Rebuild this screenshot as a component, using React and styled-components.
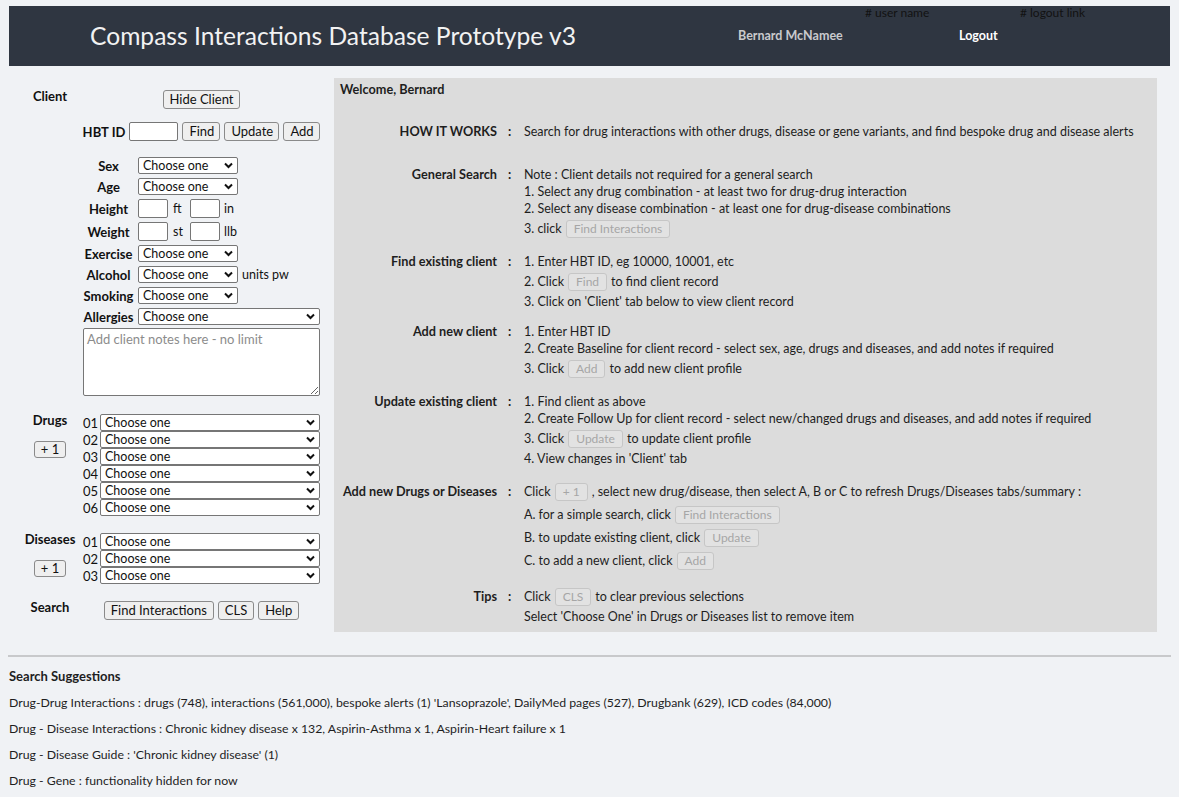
import React from "react";
import styled, { createGlobalStyle } from "styled-components";

const FONT = `"Lato", "Open Sans", sans-serif`;

const GlobalStyle = createGlobalStyle`
  html, body {
    margin: 0;
    padding: 0;
    background: #f0f2f5;
  }
  body {
    font-family: ${FONT};
    font-size: 12px;
    color: #1e1e1e;
  }
`;

const Page = styled.div`
  padding: 6px 9px 12px 9px;
  width: 1179px;
  box-sizing: border-box;
`;

/* ---------- header ---------- */

const Header = styled.header`
  display: flex;
  height: 60px;
  background: #2f3641;
`;

const TitleCell = styled.div`
  width: 729px;
  padding-left: 81px;
  box-sizing: border-box;
  line-height: 60px;
  font-size: 24.6px;
  color: #f2f2f2;
  white-space: nowrap;
`;

const UserCell = styled.div`
  display: flex;
  flex-direction: column;
  width: ${props => props.width}px;
`;

const Note = styled.span`
  line-height: 13px;
  padding-left: ${props => props.offset}px;
  font-size: 12px;
  color: #121212;
  white-space: nowrap;
`;

const HeaderLink = styled.span`
  margin-top: 9px;
  line-height: 16px;
  font-size: 12.5px;
  font-weight: 700;
  color: ${props => (props.bright ? "#ffffff" : "#c9cacd")};
  white-space: nowrap;
`;

/* ---------- main ---------- */

const Main = styled.div`
  display: flex;
  margin-top: 12px;
`;

const LeftPanel = styled.div`
  display: flex;
  flex-direction: column;
  width: 325px;
  padding: 12px 0 0 8px;
  box-sizing: border-box;
`;

const Section = styled.div`
  display: grid;
  grid-template-columns: 66px 237px;
  align-items: start;
  margin-top: ${props => props.gap || 0}px;
`;

const SideLabel = styled.div`
  display: flex;
  flex-direction: column;
  align-items: center;
  gap: 14px;
  line-height: 13px;
  font-weight: 700;
  font-size: 13px;
  color: #111;
`;

const Stack = styled.div`
  display: flex;
  flex-direction: column;
`;

const CenterRow = styled.div`
  display: flex;
  justify-content: center;
  align-items: center;
  gap: 4px;
  margin-top: ${props => props.gap || 0}px;
  white-space: nowrap;
`;

const Btn = styled.button`
  height: ${props => props.h || 19}px;
  min-width: ${props => props.w || 0}px;
  padding: 0 6px;
  font-family: ${FONT};
  font-size: 13px;
  line-height: 1;
  color: #111;
  background: #efefef;
  border: 1px solid #8a8a8a;
  border-radius: 3px;
  box-sizing: border-box;
  white-space: nowrap;
`;

const FieldLabel = styled.span`
  font-weight: 700;
  font-size: 13px;
  color: #111;
`;

const TextBox = styled.input`
  width: ${props => props.w}px;
  height: 19px;
  padding: 0 2px;
  border: 1px solid #767676;
  border-radius: 2px;
  background: #fff;
  box-sizing: border-box;
  font-family: ${FONT};
`;

const Demographics = styled.div`
  display: grid;
  grid-template-columns: 51px 1fr;
  column-gap: 4px;
  margin-top: 14px;
`;

const DemoLabel = styled.div`
  display: flex;
  align-items: center;
  justify-content: center;
  height: ${props => (props.tall ? 23 : 21)}px;
  font-weight: 700;
  font-size: 13px;
  color: #111;
  white-space: nowrap;
`;

const DemoField = styled.div`
  display: flex;
  align-items: center;
  gap: 4px;
  height: ${props => (props.tall ? 23 : 21)}px;
  font-size: 12.5px;
  color: #111;
  white-space: nowrap;
`;

const Unit = styled.span`
  width: 13px;
  padding-left: 1px;
`;

const SelectWrap = styled.span`
  position: relative;
  display: inline-flex;
  width: ${props => props.w}px;
  height: 17px;
`;

const Select = styled.select`
  appearance: none;
  -webkit-appearance: none;
  width: 100%;
  height: 17px;
  margin: 0;
  padding: 0 18px 0 4px;
  font-family: ${FONT};
  font-size: 12.5px;
  line-height: 15px;
  color: #111;
  background: #fff;
  border: 1px solid #767676;
  border-radius: 2px;
  box-sizing: border-box;
`;

const Chevron = styled.svg`
  position: absolute;
  right: 5px;
  top: 5px;
  width: 9px;
  height: 7px;
  pointer-events: none;
`;

const Notes = styled.textarea`
  width: 237px;
  height: 68px;
  margin: 1px 0 0 0;
  padding: 2px 3px;
  font-family: ${FONT};
  font-size: 13px;
  border: 1px solid #767676;
  border-radius: 2px;
  box-sizing: border-box;
  resize: vertical;
  &::placeholder {
    color: #8c8c8c;
  }
`;

const ListRow = styled.div`
  display: grid;
  grid-template-columns: 17px 220px;
  align-items: center;
  height: 17px;
  font-size: 13px;
  color: #111;
`;

/* ---------- right panel ---------- */

const RightPanel = styled.div`
  width: 823px;
  padding: 3px 6px 7px 6px;
  box-sizing: border-box;
  background: #dcdcdc;
  align-self: flex-start;
`;

const Welcome = styled.div`
  line-height: 17px;
  font-size: 12.7px;
  font-weight: 700;
`;

const Guide = styled.div`
  display: flex;
  flex-direction: column;
  gap: 13px;
  margin-top: 25px;
`;

const GuideRow = styled.div`
  display: grid;
  grid-template-columns: 157px 27px 1fr;
  align-items: start;
  margin-bottom: ${props => (props.spaced ? 13 : 0)}px;
`;

const GuideLabel = styled.div`
  text-align: right;
  font-size: 12.7px;
  font-weight: 700;
  line-height: ${props => (props.tall ? 23 : 17)}px;
  white-space: nowrap;
`;

const Colon = styled.div`
  padding-left: 11px;
  font-size: 12.7px;
  font-weight: 700;
  line-height: ${props => (props.tall ? 23 : 17)}px;
`;

const Line = styled.div`
  display: flex;
  align-items: center;
  gap: 4px;
  height: ${props => (props.tall ? 23 : 17)}px;
  font-size: 12.5px;
  white-space: nowrap;
`;

const GhostBtn = styled.span`
  display: inline-flex;
  align-items: center;
  justify-content: center;
  height: 18px;
  min-width: ${props => props.w || 0}px;
  padding: 0 7px;
  box-sizing: border-box;
  color: #a6a6a6;
  background: #e2e2e2;
  border: 1px solid #c6c6c6;
  border-radius: 3px;
  font-size: 12px;
`;

/* ---------- suggestions ---------- */

const Divider = styled.hr`
  margin: 23px -1px 0 -1px;
  border: none;
  height: 2px;
  background: #c8c9cb;
`;

const Suggestions = styled.div`
  margin-top: 11px;
`;

const SugTitle = styled.div`
  line-height: 17px;
  font-size: 13px;
  font-weight: 700;
`;

const SugLine = styled.p`
  margin: 9px 0 0 0;
  line-height: 17px;
  font-size: 12.3px;
`;

const demographics = [
  { label: "Sex", kind: "select" },
  { label: "Age", kind: "select" },
  { label: "Height", kind: "pair", units: ["ft", "in"] },
  { label: "Weight", kind: "pair", units: ["st", "llb"] },
  { label: "Exercise", kind: "select" },
  { label: "Alcohol", kind: "select", suffix: "units pw" },
  { label: "Smoking", kind: "select" },
  { label: "Allergies", kind: "wide" },
];

const ChooseOne = ({ w }) => (
  <SelectWrap w={w}>
    <Select defaultValue="">
      <option value="">Choose one</option>
    </Select>
    <Chevron viewBox="0 0 9 7">
      <path d="M1 1.5l3.5 3.5L8 1.5" fill="none" stroke="#111" strokeWidth="2" />
    </Chevron>
  </SelectWrap>
);

const DemoRow = ({ item }) => {
  const tall = item.kind === "pair";
  return (
    <>
      <DemoLabel tall={tall}>{item.label}</DemoLabel>
      <DemoField tall={tall}>
        {item.kind === "select" && <ChooseOne w={100} />}
        {item.kind === "wide" && <ChooseOne w={182} />}
        {item.kind === "pair" && (
          <>
            <TextBox w={30} />
            <Unit>{item.units[0]}</Unit>
            <TextBox w={30} />
            <span>{item.units[1]}</span>
          </>
        )}
        {item.suffix && <span>{item.suffix}</span>}
      </DemoField>
    </>
  );
};

const PickList = ({ count }) => (
  <Stack>
    {Array.from({ length: count }, (_, i) => (
      <ListRow key={i}>
        <span>{String(i + 1).padStart(2, "0")}</span>
        <ChooseOne w={220} />
      </ListRow>
    ))}
  </Stack>
);

const Step = ({ label, tall, spaced, children }) => (
  <GuideRow spaced={spaced}>
    <GuideLabel tall={tall}>{label}</GuideLabel>
    <Colon tall={tall}>:</Colon>
    <Stack>{children}</Stack>
  </GuideRow>
);

const App = () => (
  <Page>
    <GlobalStyle />
    <Header>
      <TitleCell>Compass Interactions Database Prototype v3</TitleCell>
      <UserCell width={221}>
        <Note offset={127}># user name</Note>
        <HeaderLink>Bernard McNamee</HeaderLink>
      </UserCell>
      <UserCell width={150}>
        <Note offset={61}># logout link</Note>
        <HeaderLink bright>Logout</HeaderLink>
      </UserCell>
    </Header>

    <Main>
      <LeftPanel>
        <Section>
          <SideLabel>Client</SideLabel>
          <Stack>
            <CenterRow>
              <Btn w={76}>Hide Client</Btn>
            </CenterRow>
            <CenterRow gap={13}>
              <FieldLabel>HBT ID</FieldLabel>
              <TextBox w={49} />
              <Btn w={38}>Find</Btn>
              <Btn w={55}>Update</Btn>
              <Btn w={37}>Add</Btn>
            </CenterRow>
            <Demographics>
              {demographics.map(item => (
                <DemoRow key={item.label} item={item} />
              ))}
            </Demographics>
            <Notes placeholder="Add client notes here - no limit" />
          </Stack>
        </Section>

        <Section gap={18}>
          <SideLabel>
            Drugs
            <Btn h={17} w={32}>+ 1</Btn>
          </SideLabel>
          <PickList count={6} />
        </Section>

        <Section gap={17}>
          <SideLabel>
            Diseases
            <Btn h={17} w={32}>+ 1</Btn>
          </SideLabel>
          <PickList count={3} />
        </Section>

        <Section gap={17}>
          <SideLabel>Search</SideLabel>
          <CenterRow>
            <Btn w={107}>Find Interactions</Btn>
            <Btn w={36}>CLS</Btn>
            <Btn w={40}>Help</Btn>
          </CenterRow>
        </Section>
      </LeftPanel>

      <RightPanel>
        <Welcome>Welcome, Bernard</Welcome>
        <Guide>
          <Step label="HOW IT WORKS" spaced>
            <Line>
              Search for drug interactions with other drugs, disease or gene
              variants, and find bespoke drug and disease alerts
            </Line>
          </Step>

          <Step label="General Search">
            <Line>Note : Client details not required for a general search</Line>
            <Line>
              1. Select any drug combination - at least two for drug-drug
              interaction
            </Line>
            <Line>
              2. Select any disease combination - at least one for drug-disease
              combinations
            </Line>
            <Line tall>
              <span>3. click</span>
              <GhostBtn>Find Interactions</GhostBtn>
            </Line>
          </Step>

          <Step label="Find existing client">
            <Line>1. Enter HBT ID, eg 10000, 10001, etc</Line>
            <Line tall>
              <span>2. Click</span>
              <GhostBtn w={37}>Find</GhostBtn>
              <span>to find client record</span>
            </Line>
            <Line>3. Click on 'Client' tab below to view client record</Line>
          </Step>

          <Step label="Add new client">
            <Line>1. Enter HBT ID</Line>
            <Line>
              2. Create Baseline for client record - select sex, age, drugs and
              diseases, and add notes if required
            </Line>
            <Line tall>
              <span>3. Click</span>
              <GhostBtn w={37}>Add</GhostBtn>
              <span>to add new client profile</span>
            </Line>
          </Step>

          <Step label="Update existing client">
            <Line>1. Find client as above</Line>
            <Line>
              2. Create Follow Up for client record - select new/changed drugs
              and diseases, and add notes if required
            </Line>
            <Line tall>
              <span>3. Click</span>
              <GhostBtn w={55}>Update</GhostBtn>
              <span>to update client profile</span>
            </Line>
            <Line>4. View changes in 'Client' tab</Line>
          </Step>

          <Step label="Add new Drugs or Diseases" tall>
            <Line tall>
              <span>Click</span>
              <GhostBtn w={32}>+ 1</GhostBtn>
              <span>
                , select new drug/disease, then select A, B or C to refresh
                Drugs/Diseases tabs/summary :
              </span>
            </Line>
            <Line tall>
              <span>A. for a simple search, click</span>
              <GhostBtn>Find Interactions</GhostBtn>
            </Line>
            <Line tall>
              <span>B. to update existing client, click</span>
              <GhostBtn w={55}>Update</GhostBtn>
            </Line>
            <Line tall>
              <span>C. to add a new client, click</span>
              <GhostBtn w={37}>Add</GhostBtn>
            </Line>
          </Step>

          <Step label="Tips" tall>
            <Line tall>
              <span>Click</span>
              <GhostBtn w={36}>CLS</GhostBtn>
              <span>to clear previous selections</span>
            </Line>
            <Line>Select 'Choose One' in Drugs or Diseases list to remove item</Line>
          </Step>
        </Guide>
      </RightPanel>
    </Main>

    <Divider />
    <Suggestions>
      <SugTitle>Search Suggestions</SugTitle>
      <SugLine>
        Drug-Drug Interactions : drugs (748), interactions (561,000), bespoke
        alerts (1) 'Lansoprazole', DailyMed pages (527), Drugbank (629), ICD
        codes (84,000)
      </SugLine>
      <SugLine>
        Drug - Disease Interactions : Chronic kidney disease x 132,
        Aspirin-Asthma x 1, Aspirin-Heart failure x 1
      </SugLine>
      <SugLine>Drug - Disease Guide : 'Chronic kidney disease' (1)</SugLine>
      <SugLine>Drug - Gene : functionality hidden for now</SugLine>
    </Suggestions>
  </Page>
);

export default App;
